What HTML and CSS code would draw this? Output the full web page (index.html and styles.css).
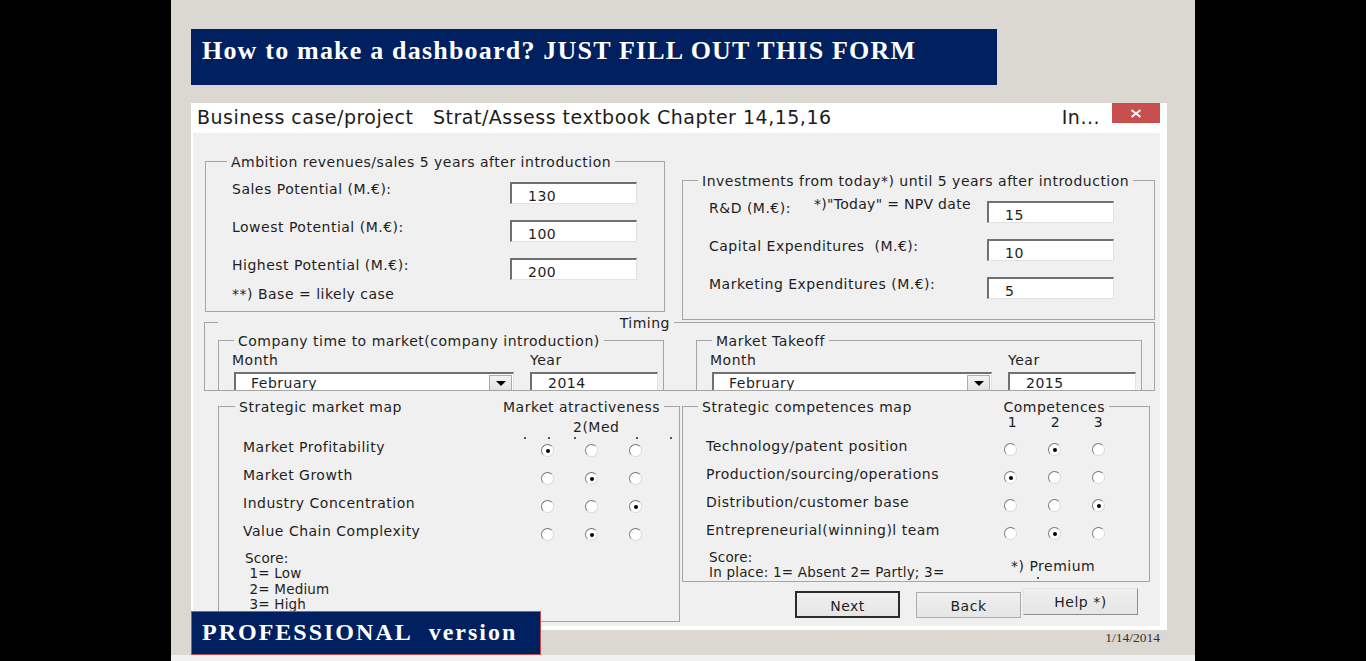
FILE: index.html
```html
<!DOCTYPE html>
<html lang="en">
<head>
    <meta charset="UTF-8">
    <meta name="viewport" content="width=device-width, initial-scale=1.0">
    <title>How to make a dashboard</title>
    <link rel="stylesheet" href="styles.css">
</head>
<body>
    <div class="slide">
        <div class="slide-title">How to make a dashboard? JUST FILL OUT THIS FORM</div>

        <div class="window">
            <div class="titlebar">
                <span class="caption">Business case/project&nbsp;&nbsp; Strat/Assess textbook Chapter 14,15,16</span>
                <span class="caption-more">In...</span>
                <span class="close-btn">
                    <svg width="12" height="9" viewBox="0 0 12 9"><path d="M1.5 1 L10.5 8 M10.5 1 L1.5 8" stroke="#fff" stroke-width="2" fill="none"/></svg>
                </span>
            </div>

            <div class="form">
                <div class="top-row">
                    <div class="group ambition">
                        <div class="group-title">Ambition revenues/sales 5 years after introduction</div>
                        <div class="field-row first">
                            <span class="label">Sales Potential (M.€):</span>
                            <span class="textbox">130</span>
                        </div>
                        <div class="field-row">
                            <span class="label">Lowest Potential (M.€):</span>
                            <span class="textbox">100</span>
                        </div>
                        <div class="field-row">
                            <span class="label">Highest Potential (M.€):</span>
                            <span class="textbox">200</span>
                        </div>
                        <div class="note">**) Base = likely case</div>
                    </div>

                    <div class="group investments">
                        <div class="group-title">Investments from today*) until 5 years after introduction</div>
                        <div class="field-row first">
                            <span class="label">R&amp;D (M.€): <span class="npv-note">*)"Today" = NPV date</span></span>
                            <span class="textbox">15</span>
                        </div>
                        <div class="field-row">
                            <span class="label">Capital Expenditures&nbsp; (M.€):</span>
                            <span class="textbox">10</span>
                        </div>
                        <div class="field-row">
                            <span class="label">Marketing Expenditures (M.€):</span>
                            <span class="textbox">5</span>
                        </div>
                    </div>
                </div>

                <div class="group timing">
                    <div class="group-title timing-title">Timing</div>
                    <div class="timing-row">
                        <div class="group subframe">
                            <div class="group-title">Company time to market(company introduction)</div>
                            <div class="date-grid">
                                <span class="label">Month</span>
                                <span class="label">Year</span>
                                <span class="combo">February<span class="combo-btn"><span class="arrow"></span></span></span>
                                <span class="textbox year">2014</span>
                            </div>
                        </div>
                        <div class="group subframe">
                            <div class="group-title">Market Takeoff</div>
                            <div class="date-grid">
                                <span class="label">Month</span>
                                <span class="label">Year</span>
                                <span class="combo">February<span class="combo-btn"><span class="arrow"></span></span></span>
                                <span class="textbox year">2015</span>
                            </div>
                        </div>
                    </div>
                </div>

                <div class="bottom-row">
                    <div class="group market-map">
                        <div class="group-title split-title market-title">
                            <span>Strategic market map</span>
                            <span>Market atractiveness</span>
                        </div>
                        <div class="scale-head">2(Med</div>
                        <div class="dots"><i></i><i></i><i></i><i></i><i></i></div>
                        <div class="choice-row">
                            <span class="choice-label">Market Profitability</span>
                            <span class="radio checked"></span><span class="radio"></span><span class="radio"></span>
                        </div>
                        <div class="choice-row">
                            <span class="choice-label">Market Growth</span>
                            <span class="radio"></span><span class="radio checked"></span><span class="radio"></span>
                        </div>
                        <div class="choice-row">
                            <span class="choice-label">Industry Concentration</span>
                            <span class="radio"></span><span class="radio"></span><span class="radio checked"></span>
                        </div>
                        <div class="choice-row">
                            <span class="choice-label">Value Chain Complexity</span>
                            <span class="radio"></span><span class="radio checked"></span><span class="radio"></span>
                        </div>
                        <div class="score">
                            Score:<br>
                            &nbsp;1= Low<br>
                            &nbsp;2= Medium<br>
                            &nbsp;3= High
                        </div>
                    </div>

                    <div class="right-col">
                        <div class="group comp-map">
                            <div class="group-title split-title comp-title">
                                <span>Strategic competences map</span>
                                <span>Competences</span>
                            </div>
                            <div class="scale-nums"><span>1</span><span>2</span><span>3</span></div>
                            <div class="choice-row">
                                <span class="choice-label">Technology/patent position</span>
                                <span class="radio"></span><span class="radio checked"></span><span class="radio"></span>
                            </div>
                            <div class="choice-row">
                                <span class="choice-label">Production/sourcing/operations</span>
                                <span class="radio checked"></span><span class="radio"></span><span class="radio"></span>
                            </div>
                            <div class="choice-row">
                                <span class="choice-label">Distribution/customer base</span>
                                <span class="radio"></span><span class="radio"></span><span class="radio checked"></span>
                            </div>
                            <div class="choice-row">
                                <span class="choice-label">Entrepreneurial(winning)l team</span>
                                <span class="radio"></span><span class="radio checked"></span><span class="radio"></span>
                            </div>
                            <div class="comp-score">
                                <div class="score">
                                    Score:<br>
                                    In place: 1= Absent 2= Partly; 3=
                                </div>
                                <div class="premium">*) Premium<i></i></div>
                            </div>
                        </div>
                        <div class="buttons">
                            <button class="btn default">Next</button>
                            <button class="btn back">Back</button>
                            <button class="btn help">Help *)</button>
                        </div>
                    </div>
                </div>
            </div>
        </div>

        <div class="footer">
            <div class="version">PROFESSIONAL&nbsp; version</div>
            <div class="date">1/14/2014</div>
        </div>
    </div>
</body>
</html>
```

FILE: styles.css
```css
body {
    margin: 0;
    background-color: #000;
    font-family: "DejaVu Sans", Verdana, sans-serif;
}
.slide {
    width: 1024px;
    height: 661px;
    margin-left: 171px;
    box-sizing: border-box;
    padding: 29px 0 0 20px;
    background-color: #dbd8d2;
    border-bottom: 6px solid #f1f1f1;
    overflow: hidden;
}
.slide-title {
    width: 806px;
    height: 56px;
    box-sizing: border-box;
    padding: 7px 0 0 11px;
    background-color: #002060;
    color: #fff;
    font: bold 26px/30px "Liberation Serif", serif;
    letter-spacing: 1.2px;
}

/* dialog window */
.window {
    width: 976px;
    height: 527px;
    margin-top: 18px;
    box-sizing: border-box;
    padding: 0 7px 4px 2px;
    background-color: #fff;
    display: flex;
    flex-direction: column;
}
.titlebar {
    height: 30px;
    flex-shrink: 0;
    display: flex;
    align-items: flex-start;
    color: #1c1c1c;
    font-size: 19px;
    line-height: 22px;
    letter-spacing: 0.5px;
}
.caption {
    margin: 3px 0 0 4px;
}
.caption-more {
    margin: 3px 12px 0 auto;
}
.close-btn {
    width: 48px;
    height: 20px;
    background-color: #c7504f;
    display: flex;
    align-items: center;
    justify-content: center;
}
.form {
    flex: 1;
    background-color: #f0f0f0;
    color: #1e1e1e;
    font-size: 14px;
    letter-spacing: 0.5px;
    overflow: hidden;
}

/* group boxes */
.group {
    border: 1px solid #a5a5a5;
    box-sizing: border-box;
}
.group-title {
    width: max-content;
    margin: -9px 0 0 15px;
    padding: 0 4px;
    background-color: #f0f0f0;
    line-height: 18px;
}
.top-row {
    display: flex;
    align-items: flex-start;
    padding-left: 12px;
}
.ambition {
    width: 460px;
    height: 151px;
    margin-top: 28px;
}
.ambition .group-title {
    margin-left: 21px;
}
.investments {
    width: 473px;
    height: 140px;
    margin: 47px 0 0 17px;
}
.field-row {
    display: flex;
    align-items: flex-start;
    margin: 16px 0 0 26px;
}
.field-row.first {
    margin-top: 11px;
}
.label {
    width: 278px;
    line-height: 14px;
    white-space: nowrap;
}
.npv-note {
    display: inline-block;
    margin: -4px 0 0 18px;
    vertical-align: top;
    letter-spacing: 0.3px;
}
.textbox {
    display: block;
    width: 127px;
    height: 22px;
    box-sizing: border-box;
    padding: 4px 0 0 16px;
    background-color: #fff;
    border-style: solid;
    border-width: 2px 1px 1px 2px;
    border-color: #707070 #e2e2e2 #e2e2e2 #707070;
    line-height: 16px;
}
.note {
    margin: 6px 0 0 26px;
    line-height: 16px;
}

/* timing */
.timing {
    width: 951px;
    height: 69px;
    margin: 2px 0 0 11px;
}
.timing-title {
    width: 456px;
    box-sizing: border-box;
    margin-left: 13px;
    text-align: right;
}
.timing-row {
    display: flex;
    gap: 32px;
    height: 59px;
    box-sizing: border-box;
    margin: -1px 0 0 13px;
    padding-top: 9px;
    overflow: hidden;
}
.subframe {
    width: 446px;
    height: 80px;
    flex-shrink: 0;
}
.date-grid {
    display: grid;
    grid-template-columns: 298px 128px;
    row-gap: 4px;
    margin: 2px 0 0 13px;
}
.date-grid .label {
    line-height: 16px;
}
.combo {
    display: flex;
    justify-content: space-between;
    width: 280px;
    height: 22px;
    margin-left: 2px;
    box-sizing: border-box;
    padding: 1px 1px 0 15px;
    background-color: #fff;
    border-style: solid;
    border-width: 2px 1px 1px 2px;
    border-color: #707070 #e2e2e2 #e2e2e2 #707070;
    line-height: 16px;
}
.combo-btn {
    width: 23px;
    height: 17px;
    box-sizing: border-box;
    border: 1px solid #acacac;
    background: linear-gradient(#f2f2f2, #e2e2e2);
    display: flex;
    align-items: center;
    justify-content: center;
}
.arrow {
    width: 0;
    height: 0;
    border-left: 5px solid transparent;
    border-right: 5px solid transparent;
    border-top: 5px solid #000;
}
.textbox.year {
    width: 128px;
    padding-top: 1px;
}

/* strategic maps */
.bottom-row {
    display: flex;
    align-items: flex-start;
    margin: 15px 0 0 25px;
}
.market-map {
    width: 462px;
    height: 216px;
}
.split-title {
    display: flex;
    justify-content: space-between;
    box-sizing: border-box;
}
.market-title {
    width: 429px;
    margin-left: 16px;
}
.scale-head {
    margin: 3px 0 0 354px;
    line-height: 16px;
}
.dots {
    display: flex;
    height: 2px;
    margin-top: 2px;
}
.dots i {
    width: 2px;
    height: 2px;
    background-color: #555;
}
.dots i:nth-child(1) { margin-left: 305px; }
.dots i:nth-child(2) { margin-left: 22px; }
.dots i:nth-child(3) { margin-left: 24px; }
.dots i:nth-child(4) { margin-left: 60px; }
.dots i:nth-child(5) { margin-left: 32px; }
.choice-row {
    display: flex;
    align-items: flex-start;
    height: 28px;
    margin-left: 24px;
}
.choice-label {
    width: 298px;
    line-height: 16px;
    white-space: nowrap;
}
.radio {
    width: 13px;
    height: 13px;
    margin: 5px 31px 0 0;
    box-sizing: border-box;
    border-radius: 50%;
    border: 1px solid;
    border-color: #7a7a7a #dadada #dadada #7a7a7a;
    background-color: #fff;
    display: flex;
    align-items: center;
    justify-content: center;
}
.radio.checked::after {
    content: "";
    width: 4px;
    height: 4px;
    border-radius: 50%;
    background-color: #000;
}
.score {
    margin-left: 26px;
    font-size: 13.5px;
    line-height: 15.3px;
    letter-spacing: 0.2px;
}
.right-col {
    width: 468px;
    margin-left: 2px;
}
.comp-map {
    height: 176px;
}
.comp-title {
    width: 411px;
}
.scale-nums {
    display: flex;
    gap: 30px;
    margin: -2px 0 0 323px;
    line-height: 16px;
}
.scale-nums span {
    width: 13px;
    text-align: center;
}
.comp-map .choice-row {
    margin-left: 23px;
}
.scale-nums + .choice-row {
    margin-top: 8px;
}
.comp-score {
    display: flex;
    align-items: flex-start;
}
.comp-score .score {
    width: 302px;
}
.premium {
    margin-top: 8px;
    line-height: 16px;
    display: flex;
    flex-direction: column;
}
.premium i {
    width: 2px;
    height: 2px;
    margin: 3px 0 0 26px;
    background-color: #555;
}

/* buttons */
.buttons {
    display: flex;
    align-items: flex-start;
    margin-left: 113px;
}
.btn {
    height: 27px;
    padding: 0;
    font-family: "DejaVu Sans", Verdana, sans-serif;
    font-size: 14px;
    letter-spacing: 0.5px;
    color: #1e1e1e;
    background: linear-gradient(#f0f0f0, #e5e5e5);
    box-sizing: border-box;
}
.btn.default {
    width: 105px;
    margin-top: 9px;
    border: 2px solid #2b2b2b;
    padding-top: 2px;
}
.btn.back {
    width: 105px;
    height: 26px;
    margin: 10px 0 0 16px;
    border: 1px solid #adadad;
    padding-top: 2px;
}
.btn.help {
    width: 115px;
    margin: 6px 0 0 2px;
    border: 1px solid;
    border-color: #e6e6e6 #8e8e8e #8e8e8e #e6e6e6;
}

/* slide footer */
.footer {
    position: relative;
    z-index: 1;
    width: 969px;
    margin-top: -19px;
    display: flex;
    justify-content: space-between;
    align-items: flex-start;
}
.version {
    width: 350px;
    height: 44px;
    box-sizing: border-box;
    padding: 6px 0 0 10px;
    background-color: #002060;
    border: 1px solid #c0504d;
    color: #fff;
    font: bold 24px/28px "Liberation Serif", serif;
    letter-spacing: 2px;
}
.date {
    margin-top: 19px;
    color: #333;
    font: 13.5px "Liberation Serif", serif;
}
```
